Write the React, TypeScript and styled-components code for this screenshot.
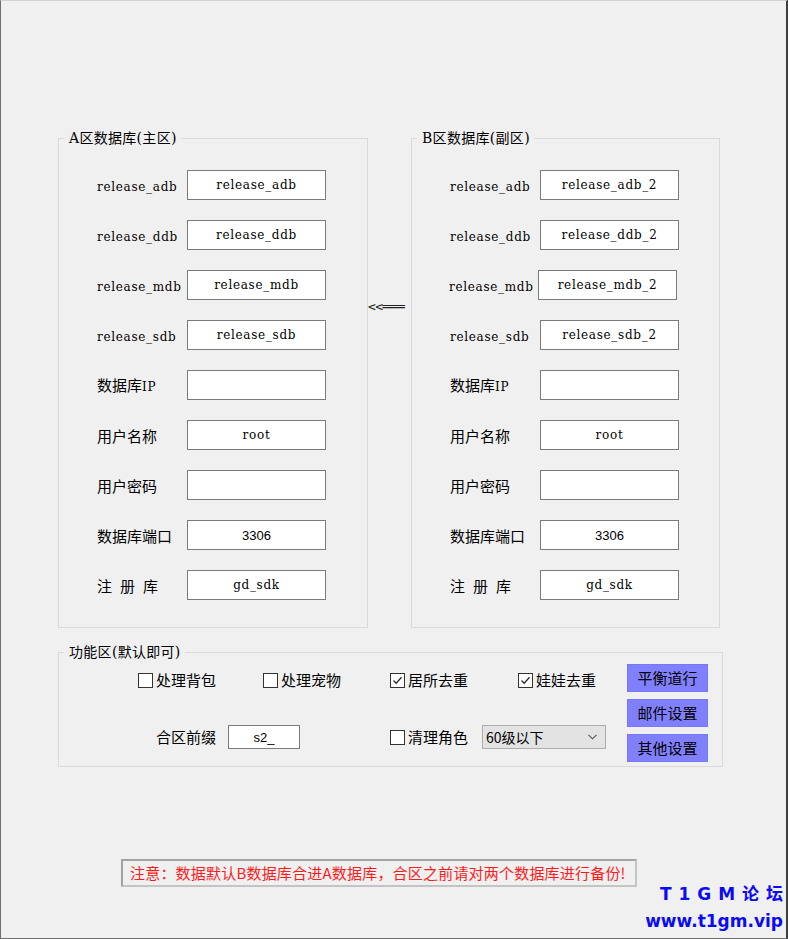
import React from "react";
import styled, { createGlobalStyle } from "styled-components";

const Global = createGlobalStyle`
  html, body {
    margin: 0;
    padding: 0;
    background: #f0f0f0;
  }
  body {
    font-family: "Noto Sans CJK SC", sans-serif;
    color: #000;
  }
`;

const SERIF_CJK = `"DejaVu Serif", "Noto Sans CJK SC", serif`;
const UI = `"Noto Sans CJK SC", sans-serif`;

const Window = styled.div`
  position: relative;
  box-sizing: border-box;
  width: 788px;
  height: 939px;
  background: #f0f0f0;
  border-top: 1px solid #d2d2d2;
  border-left: 1px solid #6e6e6e;
  border-right: 2px solid #3e3e3e;
  border-bottom: 1px solid #6e6e6e;
  padding: 128px 0 0 57px;
  display: flex;
  flex-direction: column;
  align-items: flex-start;
`;

const DbRow = styled.div`
  display: flex;
  align-items: flex-start;
`;

const Group = styled.fieldset<{ $w: number }>`
  box-sizing: border-box;
  width: ${(p) => p.$w}px;
  min-width: 0;
  margin: 0;
  padding: 0;
  border: 1px solid #dadada;
`;

const Legend = styled.legend`
  margin-left: 5px;
  padding: 0 4px 0 5px;
  font: 14px/18px ${SERIF_CJK};
  letter-spacing: 0.3px;
  color: #000;
`;

const FieldGrid = styled.div`
  display: grid;
  grid-template-columns: 82px 139px;
  grid-auto-rows: 30px;
  column-gap: 8px;
  row-gap: 20px;
  align-items: center;
  padding: 23px 0 27px 38px;
`;

const Label = styled.span<{ $shift?: number }>`
  font: 15px/20px ${UI};
  white-space: pre;
  margin-left: ${(p) => p.$shift ?? 0}px;
  padding-top: 2px;
`;

const Latin = styled.span`
  font-family: "DejaVu Serif", serif;
  font-size: 12px;
  letter-spacing: 0.7px;
`;

const Gap = styled.span`
  display: inline-block;
  width: 8px;
`;

const Field = styled.input<{ $sans?: boolean; $shift?: number }>`
  box-sizing: border-box;
  width: 139px;
  height: 30px;
  margin: 0 0 0 ${(p) => p.$shift ?? 0}px;
  padding: 0 4px;
  border: 1px solid #7a7a7a;
  background: #fff;
  text-align: center;
  color: #000;
  outline: none;
  font: ${(p) =>
    p.$sans ? `13px "Liberation Sans", sans-serif` : `12px "DejaVu Serif", serif`};
  letter-spacing: ${(p) => (p.$sans ? 0 : 0.7)}px;
`;

const ArrowCol = styled.div`
  width: 43px;
  padding-top: 170px;
  display: flex;
  justify-content: flex-start;
`;

const Arrow = styled.span`
  font: 13px/15px "DejaVu Sans Mono", monospace;
  color: #222;
  white-space: pre;
  letter-spacing: -0.6px;
`;

const FuncGroup = styled(Group)`
  margin-top: 15px;
`;

const FuncBody = styled.div`
  display: flex;
  align-items: flex-start;
`;

const OptionGrid = styled.div`
  flex: 1;
  display: grid;
  grid-template-columns: 125px 127px 128px 1fr;
  grid-template-rows: 24px 24px;
  row-gap: 33px;
  align-items: center;
  padding: 7px 0 0 79px;
`;

const Check = styled.label`
  display: flex;
  align-items: center;
  gap: 3px;
  font: 15px/20px ${UI};
  white-space: nowrap;
`;

const Box = styled.span`
  box-sizing: border-box;
  width: 15px;
  height: 15px;
  border: 1px solid #333;
  background: #fff;
  display: flex;
  align-items: center;
  justify-content: center;
  flex: none;
`;

const PrefixField = styled.div`
  grid-column: 1 / 3;
  display: flex;
  align-items: center;
  gap: 12px;
  padding-left: 18px;
  font: 15px/20px ${UI};
`;

const SmallInput = styled.input`
  box-sizing: border-box;
  width: 72px;
  height: 24px;
  margin: 0;
  padding: 0 4px;
  border: 1px solid #7a7a7a;
  background: #fff;
  text-align: center;
  font: 13px "Liberation Sans", sans-serif;
  color: #000;
  outline: none;
`;

const RoleField = styled.div`
  grid-column: 3 / 5;
  display: flex;
  align-items: center;
  gap: 14px;
`;

const Combo = styled.div`
  box-sizing: border-box;
  width: 124px;
  height: 24px;
  border: 1px solid #adadad;
  background: #e3e3e3;
  display: flex;
  align-items: center;
  justify-content: space-between;
  padding: 0 8px 0 3px;
  font: 14px/20px ${UI};
  color: #000;
`;

const ButtonCol = styled.div`
  display: flex;
  flex-direction: column;
  gap: 7px;
  padding: 3px 0 4px;
  margin-right: 14px;
`;

const ActionButton = styled.button`
  box-sizing: border-box;
  width: 81px;
  height: 28px;
  margin: 0;
  padding: 0;
  border: 1px solid #7878f5;
  background: #8080ff;
  color: #000;
  font: 15px/20px ${UI};
  cursor: pointer;
`;

const Notice = styled.div`
  box-sizing: border-box;
  margin: 92px 0 0 63px;
  width: 516px;
  height: 28px;
  border: 2px solid #a3a3a3;
  border-right-color: #c4c4c4;
  border-bottom-color: #c4c4c4;
  display: flex;
  align-items: center;
  padding-left: 7px;
  font: 15px/20px ${UI};
  letter-spacing: 0.2px;
  color: #ff1a1a;
  white-space: nowrap;
`;

const Watermark = styled.div`
  position: absolute;
  right: 3px;
  bottom: 6px;
  display: flex;
  flex-direction: column;
  align-items: flex-end;
  gap: 5px;
  font: bold 17px/22px "DejaVu Sans", "Noto Sans CJK SC", sans-serif;
  color: #0a0af5;
  white-space: pre;
`;

const MarkTitle = styled.span`
  word-spacing: 1px;
`;

type Row = { label: React.ReactNode; value: string; sans?: boolean; shift?: number };

const baseRows = (suffix: string): Row[] => [
  { label: <Latin>release_adb</Latin>, value: `release_adb${suffix}` },
  { label: <Latin>release_ddb</Latin>, value: `release_ddb${suffix}` },
  { label: <Latin>release_mdb</Latin>, value: `release_mdb${suffix}` },
  { label: <Latin>release_sdb</Latin>, value: `release_sdb${suffix}` },
  { label: <>数据库<Latin>IP</Latin></>, value: "" },
  { label: "用户名称", value: "root" },
  { label: "用户密码", value: "" },
  { label: "数据库端口", value: "3306", sans: true },
  { label: <>注<Gap />册<Gap />库</>, value: "gd_sdk" },
];

const rowsA = baseRows("");
const rowsB = baseRows("_2").map((r, i) => (i === 2 ? { ...r, shift: -1 } : r));

function DbGroup({ title, rows, width }: { title: string; rows: Row[]; width: number }) {
  return (
    <Group $w={width}>
      <Legend>{title}</Legend>
      <FieldGrid>
        {rows.map((r, i) => (
          <React.Fragment key={i}>
            <Label $shift={r.shift}>{r.label}</Label>
            <Field
              readOnly
              value={r.value}
              $sans={r.sans}
              $shift={r.shift ? r.shift * 2 : 0}
            />
          </React.Fragment>
        ))}
      </FieldGrid>
    </Group>
  );
}

function CheckMark() {
  return (
    <svg width="11" height="11" viewBox="0 0 11 11">
      <polyline points="1.5,5.5 4.2,8.2 9.5,2.2" fill="none" stroke="#2a2a2a" strokeWidth="1.3" />
    </svg>
  );
}

function Option({ text, checked }: { text: string; checked?: boolean }) {
  return (
    <Check>
      <Box>{checked && <CheckMark />}</Box>
      {text}
    </Check>
  );
}

export default function App() {
  return (
    <>
      <Global />
      <Window>
        <DbRow>
          <DbGroup title="A区数据库(主区)" rows={rowsA} width={310} />
          <ArrowCol>
            <Arrow>{"<<═══"}</Arrow>
          </ArrowCol>
          <DbGroup title="B区数据库(副区)" rows={rowsB} width={309} />
        </DbRow>

        <FuncGroup $w={665}>
          <Legend>功能区(默认即可)</Legend>
          <FuncBody>
            <OptionGrid>
              <Option text="处理背包" />
              <Option text="处理宠物" />
              <Option text="居所去重" checked />
              <Option text="娃娃去重" checked />
              <PrefixField>
                合区前缀
                <SmallInput readOnly value="s2_" />
              </PrefixField>
              <RoleField>
                <Option text="清理角色" />
                <Combo>
                  60级以下
                  <svg width="9" height="6" viewBox="0 0 9 6">
                    <polyline points="0.5,0.8 4.5,4.8 8.5,0.8" fill="none" stroke="#555" strokeWidth="1.1" />
                  </svg>
                </Combo>
              </RoleField>
            </OptionGrid>
            <ButtonCol>
              <ActionButton>平衡道行</ActionButton>
              <ActionButton>邮件设置</ActionButton>
              <ActionButton>其他设置</ActionButton>
            </ButtonCol>
          </FuncBody>
        </FuncGroup>

        <Notice>注意：数据默认B数据库合进A数据库，合区之前请对两个数据库进行备份!</Notice>

        <Watermark>
          <MarkTitle>T 1 G M 论 坛</MarkTitle>
          <span>www.t1gm.vip</span>
        </Watermark>
      </Window>
    </>
  );
}
